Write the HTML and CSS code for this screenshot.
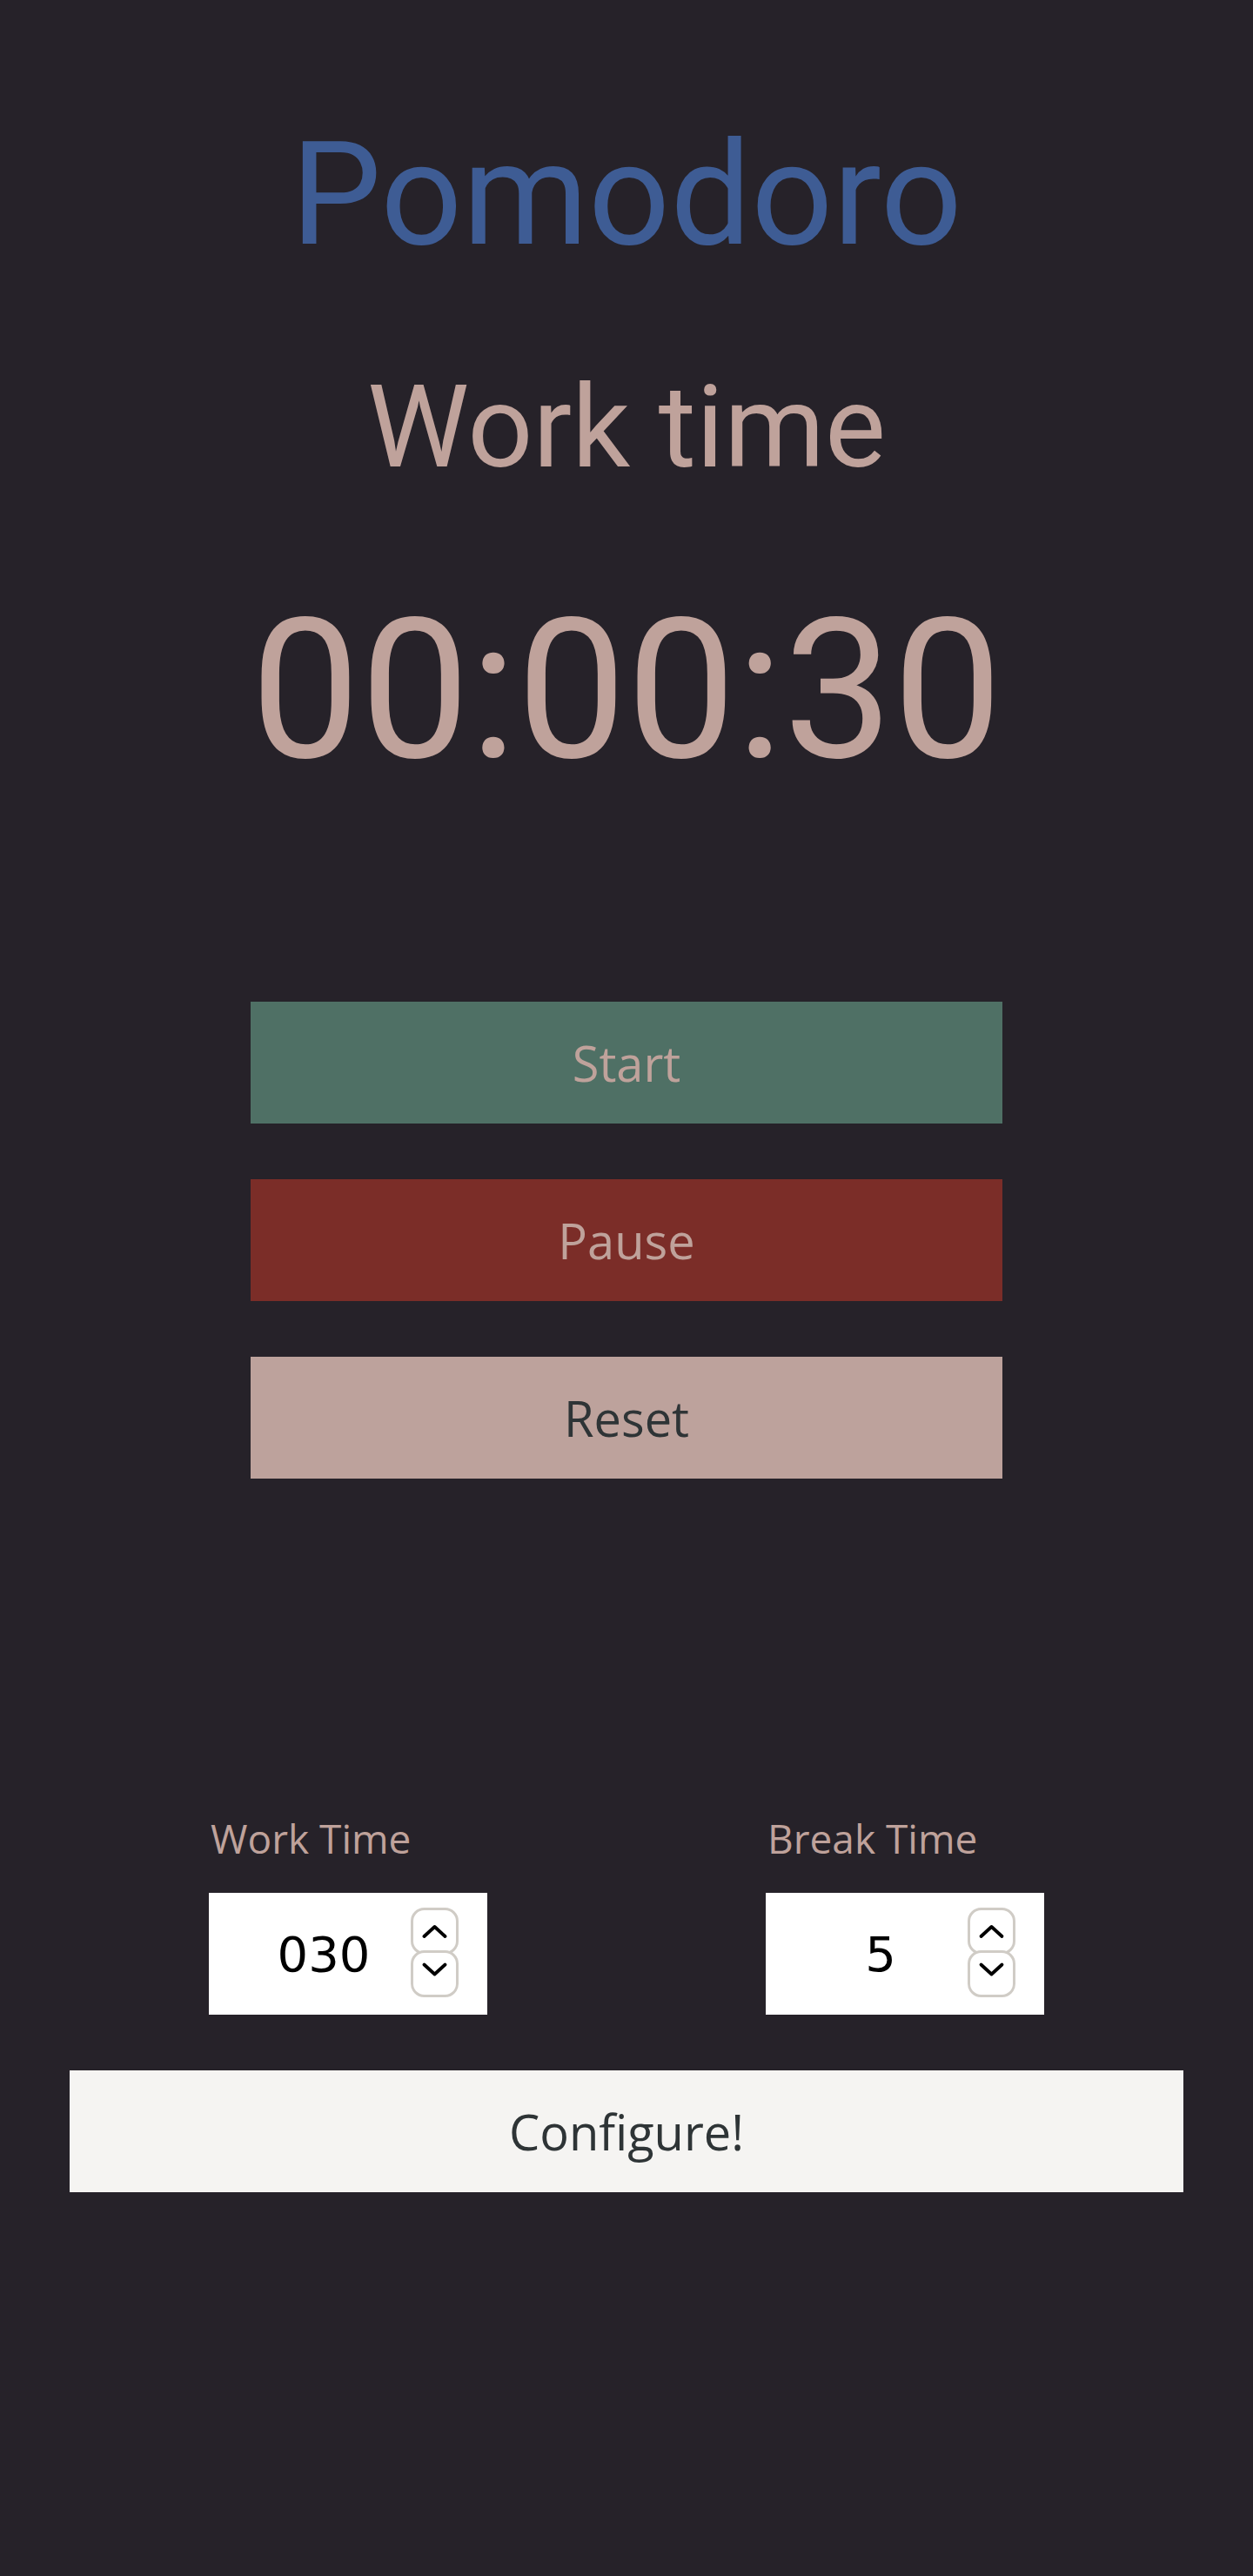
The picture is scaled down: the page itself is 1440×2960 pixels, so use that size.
FILE: index.html
```html
<!DOCTYPE html>
<html lang="en">
<head>
<meta charset="utf-8">
<title>Pomodoro</title>
<link rel="stylesheet" href="styles.css">
</head>
<body>
<main class="app">
  <h1 class="title">Pomodoro</h1>
  <h2 class="mode">Work time</h2>
  <div class="timer">00:00:30</div>

  <div class="controls">
    <button class="btn btn-start" type="button">Start</button>
    <button class="btn btn-pause" type="button">Pause</button>
    <button class="btn btn-reset" type="button">Reset</button>
  </div>

  <form class="config">
    <div class="fields">
      <div class="field-col">
        <div class="field">
          <label class="field-label" for="work">Work Time</label>
          <div class="num">
            <input class="num-input" id="work" type="text" value="030">
            <svg class="spin" width="56" height="103" viewBox="0 0 56 103" aria-hidden="true">
              <rect x="1.5" y="1.5" width="52" height="51" rx="14" fill="#fff" stroke="#d0ccc6" stroke-width="3"/>
              <rect x="1.5" y="50.5" width="52" height="51" rx="14" fill="#fff" stroke="#d0ccc6" stroke-width="3"/>
              <polyline points="15.5,33 27.5,22 39.5,33" fill="none" stroke="#000" stroke-width="3.8" stroke-linecap="round" stroke-linejoin="round"/>
              <polyline points="15.5,65.5 27.5,76.5 39.5,65.5" fill="none" stroke="#000" stroke-width="3.8" stroke-linecap="round" stroke-linejoin="round"/>
            </svg>
          </div>
        </div>
      </div>
      <div class="field-col">
        <div class="field">
          <label class="field-label" for="break">Break Time</label>
          <div class="num">
            <input class="num-input" id="break" type="text" value="5">
            <svg class="spin" width="56" height="103" viewBox="0 0 56 103" aria-hidden="true">
              <rect x="1.5" y="1.5" width="52" height="51" rx="14" fill="#fff" stroke="#d0ccc6" stroke-width="3"/>
              <rect x="1.5" y="50.5" width="52" height="51" rx="14" fill="#fff" stroke="#d0ccc6" stroke-width="3"/>
              <polyline points="15.5,33 27.5,22 39.5,33" fill="none" stroke="#000" stroke-width="3.8" stroke-linecap="round" stroke-linejoin="round"/>
              <polyline points="15.5,65.5 27.5,76.5 39.5,65.5" fill="none" stroke="#000" stroke-width="3.8" stroke-linecap="round" stroke-linejoin="round"/>
            </svg>
          </div>
        </div>
      </div>
    </div>
    <button class="btn btn-config" type="button">Configure!</button>
  </form>
</main>
</body>
</html>
```

FILE: styles.css
```css
html, body {
  margin: 0;
  padding: 0;
  background: #262229;
}

body {
  min-height: 2960px;
  font-family: "Open Sans", "Noto Sans", sans-serif;
}

.app {
  display: flex;
  flex-direction: column;
  align-items: center;
  padding-top: 141px;
}

.title {
  margin: 0;
  font-family: Roboto, "Liberation Sans", sans-serif;
  font-weight: 400;
  font-size: 165px;
  line-height: 1;
  color: #3e5c94;
  text-align: center;
}

.mode {
  margin: 119px 0 0;
  font-family: Roboto, "Liberation Sans", sans-serif;
  font-weight: 400;
  font-size: 132px;
  line-height: 1;
  color: #bfa29b;
  text-align: center;
}

.timer {
  margin-top: 125px;
  font-family: Roboto, "Liberation Sans", sans-serif;
  font-size: 224px;
  line-height: 1;
  color: #bfa29b;
  text-align: center;
}

.controls {
  margin-top: 245px;
  width: 864px;
  display: flex;
  flex-direction: column;
  gap: 64px;
}

.btn {
  display: flex;
  align-items: center;
  justify-content: center;
  height: 140px;
  border: 0;
  border-radius: 0;
  padding: 0;
  font-family: "Open Sans", "Noto Sans", sans-serif;
  font-size: 56px;
  font-weight: 400;
  cursor: pointer;
}

.btn-start {
  background: #4f7065;
  color: #bfa29b;
}

.btn-pause {
  background: #7b2d28;
  color: #bfa29b;
}

.btn-reset {
  background: #bda29c;
  color: #2e3436;
}

.config {
  margin-top: 389px;
  width: 1280px;
  display: flex;
  flex-direction: column;
  gap: 64px;
}

.fields {
  display: grid;
  grid-template-columns: 1fr 1fr;
}

.field-col {
  display: flex;
  justify-content: center;
}

.field {
  width: 320px;
  display: flex;
  flex-direction: column;
  gap: 39px;
}

.field-label {
  display: block;
  padding-left: 2px;
  font-family: "Open Sans", "Noto Sans", sans-serif;
  font-size: 46px;
  line-height: 48px;
  color: #bfa29b;
}

.num {
  display: flex;
  align-items: center;
  height: 140px;
  background: #fff;
  padding: 0 32px;
  box-sizing: border-box;
}

.num-input {
  flex: 1;
  min-width: 0;
  border: 0;
  outline: none;
  background: transparent;
  padding: 0;
  margin: 0;
  font-family: "DejaVu Sans", sans-serif;
  font-size: 56px;
  color: #000;
  text-align: center;
}

.spin {
  flex: none;
  display: block;
  margin-top: -4px;
}

.btn-config {
  width: 100%;
  background: #f5f4f2;
  color: #2e3436;
}
```
